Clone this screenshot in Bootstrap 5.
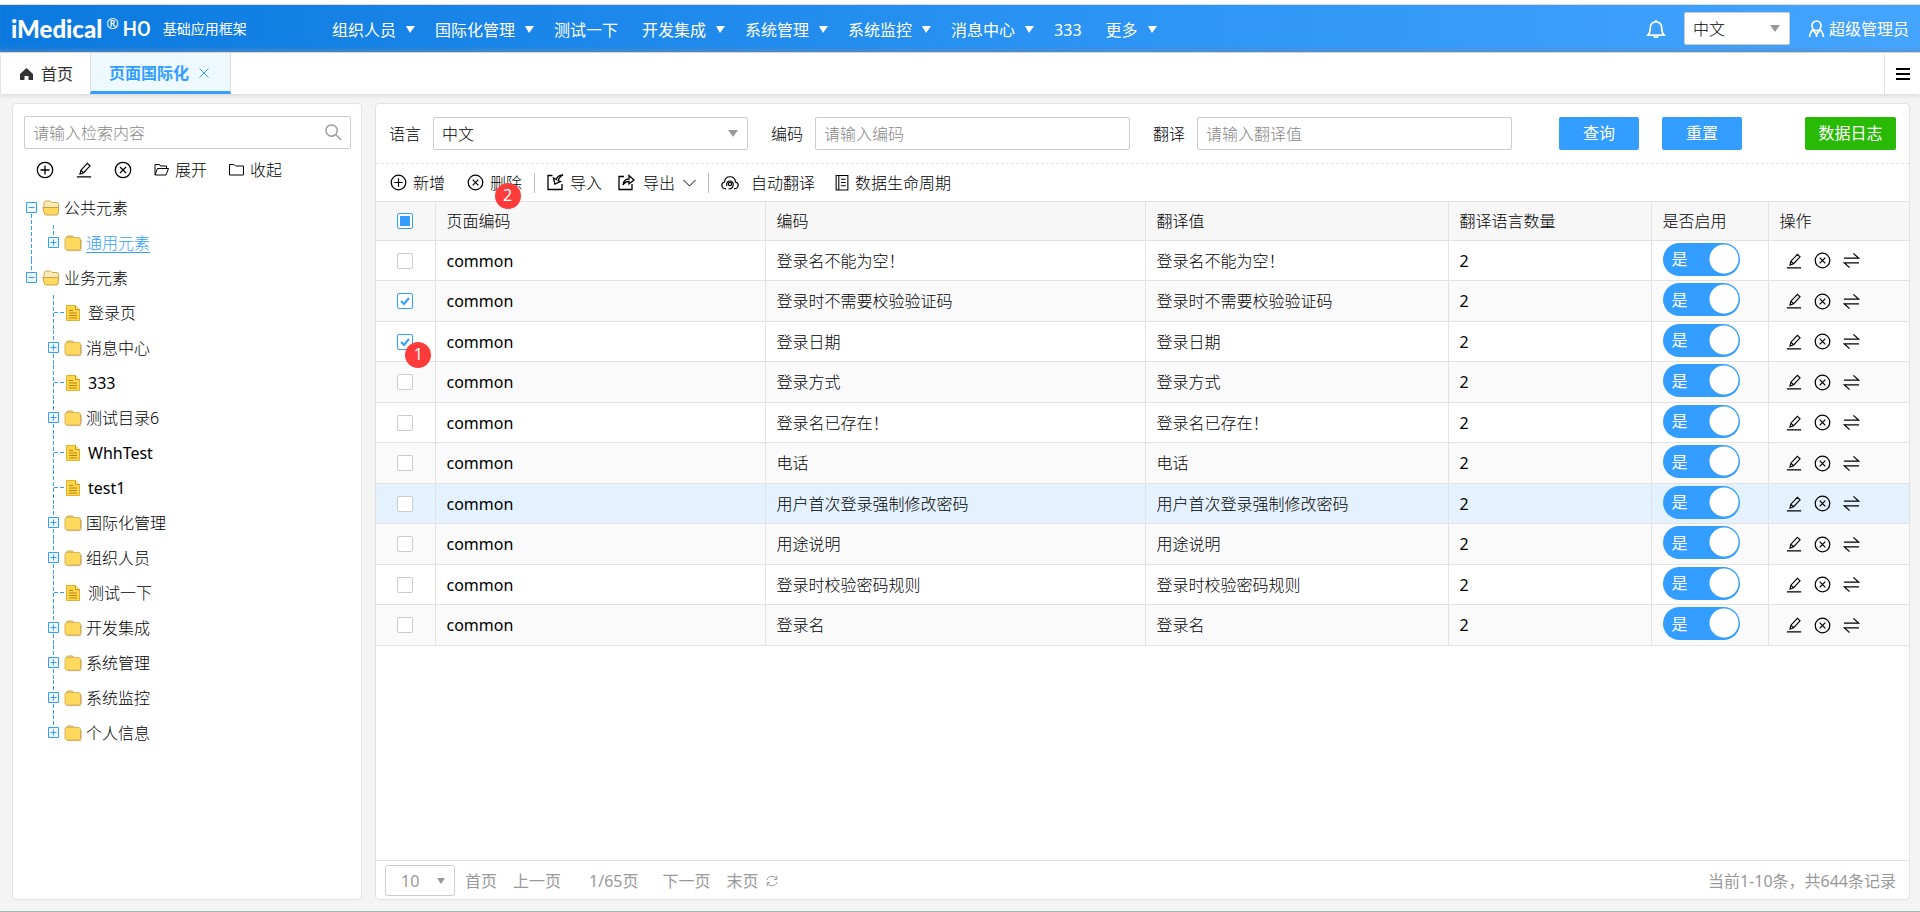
<!DOCTYPE html>
<html lang="zh-CN">
<head>
<meta charset="utf-8">
<meta name="viewport" content="width=device-width, initial-scale=1">
<title>页面国际化</title>
<link href="https://cdn.jsdelivr.net/npm/bootstrap@5.3.0/dist/css/bootstrap.min.css" rel="stylesheet">
<style>
:root{--hisui:#339eff;--line:#e2e2e2;--field:#ccc}
body{font:16px/20px "Noto Sans","Noto Sans CJK SC",sans-serif;font-weight:300;color:#000;background:#f4f4f4;border-bottom:1px solid #a3b4bd;min-height:100vh}
svg{display:block;flex:none;fill:none;stroke:currentColor}
button,select,input{font:inherit;color:inherit}
a{color:inherit;text-decoration:none}
.strip{height:5px;background:#fff;border-bottom:1px solid #ddd}
.topbar{height:47px;padding-left:11px;padding-right:11px;color:#fff;font-weight:400;background:linear-gradient(90deg,#0b79df,#2a93f3 55%,#44a5ff);box-shadow:inset 0 -4px 4px -2px rgba(110,150,190,.7)}
.brand{width:309px;height:40px}
.brand-name{font:900 24px/28px Lato,sans-serif}
.brand-reg{font-size:15px;line-height:16px;margin-left:4px;align-self:flex-start;padding-top:6px}
.brand-ho{font:500 20px/28px Roboto,sans-serif;margin-left:4px}
.brand-sub{font-size:14px;margin-left:12px}
.menu-main{padding-top:2px}
.menu-link{display:flex;align-items:center;gap:10px;padding:0 12px;line-height:24px;white-space:nowrap}
.menu-link.has-sub{padding-right:8px}
.has-sub::after{content:"";border:solid transparent;border-width:7px 5px 0 4px;border-top-color:currentColor;width:9px}
.user-tools{gap:18px}
.pick{appearance:none;border:1px solid var(--field);border-radius:2px;height:33px;padding:0 30px 0 8px;background:#fff url("data:image/svg+xml,%3Csvg xmlns='http://www.w3.org/2000/svg' width='10' height='7'%3E%3Cpath d='M0 0h10L5 7z' fill='%23999'/%3E%3C/svg%3E") no-repeat right 9px center;color:#000}
.pick-lang{width:106px;font-weight:300}
.pick-size{width:70px;height:31px;color:#999;font-weight:400;padding-left:15px;border-radius:3px;background-size:8px 6px}
.tabbar{height:42px;background:#fff;border-top:1px solid #d5d5d5;box-shadow:0 1px 5px rgba(0,0,0,.14);z-index:1}
.tablist{border:1px solid var(--line);border-width:0 1px 0 1px;border-radius:4px 4px 0 0;padding-left:1px}
.tab-home{padding:0 17px 0 18px;gap:8px;color:#333;font-weight:400}
.tab-open{background:#edf8ff;border-left:1px solid #ddd;border-right:1px solid #ddd;border-bottom:3px solid var(--hisui);color:var(--hisui);padding:2px 21px 0 18px;gap:10px;font-weight:600}
.plain{border:0;background:none;padding:0;display:inline-flex;align-items:center;white-space:nowrap}
.burger{width:35px}
.workspace{padding:9px 12px 11px 12px;gap:13px}
.pane{background:#fff;border:1px solid var(--line);border-radius:4px}
.side{width:350px;padding:12px 10px 0 11px}
.field{border:1px solid var(--field);border-radius:2px;height:33px;padding:0 8px;background:#fff;outline:0;min-width:0}
.field::placeholder{color:#888;opacity:1}
.seek{color:#999}
.side-tools{height:41px;padding-left:12px;gap:22px}
.side-tools .plain{gap:6px}
.tree,.tree ul{list-style:none;margin:0;padding:0}
.tree{--dash:repeating-linear-gradient(var(--hisui) 0 4px,transparent 4px 6px)}
.tree>li{background:var(--dash) 7px 18px/1px 100% no-repeat}
.tree>li:last-child{background-position:7px 0;background-size:1px 17px}
.tree ul>li{background:var(--dash) 29px 0/1px 100% no-repeat}
.tree ul>li:last-child{background-size:1px 17px}
.node{display:flex;align-items:center;height:35px;padding-left:2px}
.tree ul .node{padding-left:24px}
.node .ex{width:11px;height:11px;background:#fff}
.node .ic{width:18px;height:18px;margin:0 4px 0 5px}
.leaf .branch{width:11px;height:1px;margin-left:6px;background:repeating-linear-gradient(90deg,var(--hisui) 0 4px,transparent 4px 6px)}
.leaf .ic{margin:0 6px 0 -1px}
.node a.on{color:var(--hisui);text-decoration:underline;text-underline-offset:3px}
.latin{font-weight:400}
.filters{padding:13px;gap:23px;border-bottom:1px dashed var(--line)}
.f-item{display:flex;align-items:center;flex:1 1 0;gap:12px;max-width:359px}
.f-item label{white-space:nowrap}
.f-item .field,.f-item .pick{flex:1;min-width:0}
.act{height:33px;border:0;border-radius:2px;color:#fff;font-weight:400;background:var(--hisui);width:80px;padding:0;line-height:33px}
.act.log{background:#28ba05;width:91px}
.tools{height:37px;padding:0 14px;gap:16px}
.tools .plain{gap:6px}
.tools .wide{gap:8px}
.tools>.plain:first-child{margin-right:6px}
.tool-set{display:flex;align-items:center;gap:12px}
.bar{width:1px;height:20px;background:#bbb}
.pin{position:absolute;width:26px;height:26px;border-radius:50%;background:#fe3b3b;color:#fff;font-weight:400;line-height:25px;text-align:center;z-index:2}
.grid{table-layout:fixed;width:100%;border-collapse:collapse;margin:0}
.grid th,.grid td{font-weight:inherit;padding:0 11px;border:1px solid var(--line);height:40px;white-space:nowrap;text-align:left;vertical-align:middle}
.grid th{background:#f7f7f7;height:39px}
.grid td:nth-child(2),.grid td:nth-child(5){font-weight:400}
.grid tr>:first-child{border-left:0;text-align:center;padding:0}
.grid tr>:last-child{border-right:0;padding-left:17px}
.grid tr>th:last-child{padding-left:11px}
.grid tbody tr:nth-child(even){background:#fafafa}
.grid tbody tr:nth-child(even) td{height:41px}
.grid tbody tr.hot{background:#e3f2fe}
.tick{appearance:none;display:block;margin:0 auto;width:16px;height:16px;border:1px solid var(--field);border-radius:2px;background:#fff center no-repeat}
.tick:checked{border-color:var(--hisui);background-image:url("data:image/svg+xml,%3Csvg xmlns='http://www.w3.org/2000/svg' width='12' height='12'%3E%3Cpath d='M2 6l3 3 5-6' fill='none' stroke='%23339eff' stroke-width='2'/%3E%3C/svg%3E")}
.tick.part{border-color:var(--hisui);background-image:linear-gradient(var(--hisui),var(--hisui));background-size:10px 10px}
.onoff{display:grid;align-items:center;width:77px;height:33px;margin-bottom:3px}
.onoff>*{grid-area:1/1}
.onoff input{appearance:none;width:100%;height:33px;margin:0;border-radius:17px;background:radial-gradient(circle at 61px 16px,#fff 14px,transparent 15px),var(--hisui)}
.onoff span{color:#fff;font-weight:400;padding-left:9px;z-index:1}
.row-acts{display:flex;gap:12px}
.pager{height:39px;border-top:1px solid var(--line);color:#999;font-weight:400;padding:1px 13px 0 9px}
.pager-nav{display:flex;align-items:center;gap:16px;padding-left:10px}
</style>
</head>
<body class="d-flex flex-column">
<svg width="0" height="0" class="position-absolute" aria-hidden="true">
  <symbol id="i-add" viewBox="0 0 18 18"><circle cx="9" cy="9" r="7.7"/><path d="M9 4.5v9M4.5 9h9"/></symbol>
  <symbol id="i-del" viewBox="0 0 18 18"><circle cx="9" cy="9" r="7.7"/><path d="M6 6l6 6M12 6l-6 6"/></symbol>
  <symbol id="i-pen" viewBox="0 0 18 18"><path d="M1 16.7h16M4.5 13.5l1-4.3 7.3-7.6 3 2.7-7.2 7.8zM5.6 9.4l3 2.7"/></symbol>
  <symbol id="i-swap" viewBox="0 0 18 18"><path d="M1 6.5h15.5L11 1.5M17 11.5H1.500l5.500 5"/></symbol>
  <symbol id="i-plus" viewBox="0 0 11 11"><path d="M.5.5h10v10H.5zM5.500 2.500v6M2.500 5.500h6" stroke="#339eff" fill="#eef7ff"/></symbol>
  <symbol id="i-minus" viewBox="0 0 11 11"><path d="M.5.5h10v10H.5zM2.500 5.500h6" stroke="#339eff" fill="#eef7ff"/></symbol>
  <symbol id="i-dir" viewBox="0 0 18 18"><path d="M2 4l1.500-2h5l1.500 2z" fill="#f9e3a0" stroke="#c9a03f"/><rect x="1" y="3.500" width="15.500" height="12.500" rx="2" fill="#ffd95e" stroke="#d9b45a"/><path d="M3 16.700h13.500l.8-1.500V6" stroke="#b98f3c" stroke-opacity=".6"/></symbol>
  <symbol id="i-dir-open" viewBox="0 0 18 18"><path d="M2 9V4l1.500-2h5L10 3.500h5.500l1 1.500v5z" fill="#faeab5" stroke="#d0a850"/><path d="M.8 8.500h15.900l-.7 6.500-1 1H3.500l-1-1z" fill="#ffd95e" stroke="#c9a14a"/></symbol>
  <symbol id="i-doc" viewBox="0 0 18 18"><path d="M2.500 1.500h9l4 4v11h-13z" fill="#ffd54a" stroke="#e2b02c"/><path d="M11.500 1.500v4h4" stroke="#c9971a" fill="#fff0b3"/><path d="M5 6.500h4M5 9h8M5 11.500h8M5 14h8" stroke="#b9860c"/></symbol>
</svg>

<div class="strip"></div>
<header class="topbar d-flex align-items-center">
  <div class="brand d-flex align-items-center">
    <span class="brand-name">iMedical</span><span class="brand-reg">®</span><span class="brand-ho">HO</span><span class="brand-sub">基础应用框架</span>
  </div>
  <nav class="menu-main d-flex flex-grow-1" aria-label="主菜单">
    <a class="menu-link has-sub" href="#">组织人员</a>
    <a class="menu-link has-sub" href="#">国际化管理</a>
    <a class="menu-link" href="#">测试一下</a>
    <a class="menu-link has-sub" href="#">开发集成</a>
    <a class="menu-link has-sub" href="#">系统管理</a>
    <a class="menu-link has-sub" href="#">系统监控</a>
    <a class="menu-link has-sub" href="#">消息中心</a>
    <a class="menu-link" href="#">333</a>
    <a class="menu-link has-sub" href="#">更多</a>
  </nav>
  <div class="user-tools d-flex align-items-center">
    <button class="plain" aria-label="消息"><svg width="20" height="20" viewBox="0 0 21 20" stroke-width="1.800"><path d="M2 16.500h17c-2-2-2.500-4-2.500-7.500C16.500 4.500 14 2.500 10.500 2.500S4.500 4.500 4.500 9c0 3.500-.5 5.500-2.500 7.500zM10.500.5v2M8 17c.5 2.500 4.500 2.500 5 0"/></svg></button>
    <select class="pick pick-lang" aria-label="界面语言"><option>中文</option></select>
    <a href="#" class="d-flex align-items-center"><svg class="me-1" width="17" height="18" viewBox="0 0 17 18" stroke-width="1.700"><ellipse cx="8.500" cy="5.800" rx="4.500" ry="4.800"/><path d="M5.500 9.500C3 11 2 13 1.500 17M11.500 9.500c2.500 1.500 3.500 3.500 4 7.500M5.500 10.500l3 4 3-4M8.500 14v3"/></svg>超级管理员</a>
  </div>
</header>

<div class="tabbar d-flex">
  <div class="tablist d-flex flex-grow-1">
    <a href="#" class="tab-home d-flex align-items-center"><svg width="13" height="12" viewBox="0 0 13 12"><path d="M6.500 0L13 6v6H8.500V8h-4v4H0V6z" fill="#333" stroke="none"/></svg>首页</a>
    <a href="#" class="tab-open d-flex align-items-center">页面国际化<svg width="10" height="10" viewBox="0 0 10 10"><path d="M.5.5l9 9M9.500.5l-9 9"/></svg></a>
  </div>
  <button class="plain burger justify-content-center" aria-label="标签菜单"><svg width="14" height="12" viewBox="0 0 14 12" stroke-width="2"><path d="M0 1h14M0 6h14M0 11h14"/></svg></button>
</div>

<main class="workspace d-flex flex-grow-1">
  <aside class="pane side flex-shrink-0">
    <div class="field d-flex align-items-center">
      <input class="field border-0 p-0 flex-grow-1 h-auto" type="search" placeholder="请输入检索内容" aria-label="检索">
      <button class="plain seek" aria-label="搜索"><svg width="17" height="17" viewBox="0 0 18 18" stroke-width="1.500"><circle cx="7" cy="7" r="6"/><path d="M11.500 11.500l5.500 5.500"/></svg></button>
    </div>
    <div class="side-tools d-flex align-items-center">
      <button class="plain" aria-label="新增"><svg width="18" height="18" stroke-width="1.300"><use href="#i-add"/></svg></button>
      <button class="plain" aria-label="修改"><svg width="16" height="16" stroke-width="1.300"><use href="#i-pen"/></svg></button>
      <button class="plain" aria-label="删除"><svg width="18" height="18" stroke-width="1.300"><use href="#i-del"/></svg></button>
      <button class="plain"><svg width="15" height="13" viewBox="0 0 15 13"><path d="M1 12V1.500h4.500l1 1.500h6v2.500M1 12L3.500 5.500h11L12 12z"/></svg>展开</button>
      <button class="plain"><svg width="15" height="13" viewBox="0 0 15 13"><path d="M.5 12V1.500H5L6.500 3h8v9z"/></svg>收起</button>
    </div>
    <ul class="tree">
      <li><div class="node"><svg class="ex"><use href="#i-minus"/></svg><svg class="ic"><use href="#i-dir-open"/></svg><a href="#">公共元素</a></div>
        <ul><li><div class="node"><svg class="ex"><use href="#i-plus"/></svg><svg class="ic"><use href="#i-dir"/></svg><a class="on" href="#">通用元素</a></div></li></ul>
      </li>
      <li><div class="node"><svg class="ex"><use href="#i-minus"/></svg><svg class="ic"><use href="#i-dir-open"/></svg><a href="#">业务元素</a></div>
        <ul>
          <li><div class="node leaf"><span class="branch"></span><svg class="ic"><use href="#i-doc"/></svg><a href="#">登录页</a></div></li>
          <li><div class="node"><svg class="ex"><use href="#i-plus"/></svg><svg class="ic"><use href="#i-dir"/></svg><a href="#">消息中心</a></div></li>
          <li><div class="node leaf"><span class="branch"></span><svg class="ic"><use href="#i-doc"/></svg><a class="latin" href="#">333</a></div></li>
          <li><div class="node"><svg class="ex"><use href="#i-plus"/></svg><svg class="ic"><use href="#i-dir"/></svg><a href="#">测试目录6</a></div></li>
          <li><div class="node leaf"><span class="branch"></span><svg class="ic"><use href="#i-doc"/></svg><a class="latin" href="#">WhhTest</a></div></li>
          <li><div class="node leaf"><span class="branch"></span><svg class="ic"><use href="#i-doc"/></svg><a class="latin" href="#">test1</a></div></li>
          <li><div class="node"><svg class="ex"><use href="#i-plus"/></svg><svg class="ic"><use href="#i-dir"/></svg><a href="#">国际化管理</a></div></li>
          <li><div class="node"><svg class="ex"><use href="#i-plus"/></svg><svg class="ic"><use href="#i-dir"/></svg><a href="#">组织人员</a></div></li>
          <li><div class="node leaf"><span class="branch"></span><svg class="ic"><use href="#i-doc"/></svg><a href="#">测试一下</a></div></li>
          <li><div class="node"><svg class="ex"><use href="#i-plus"/></svg><svg class="ic"><use href="#i-dir"/></svg><a href="#">开发集成</a></div></li>
          <li><div class="node"><svg class="ex"><use href="#i-plus"/></svg><svg class="ic"><use href="#i-dir"/></svg><a href="#">系统管理</a></div></li>
          <li><div class="node"><svg class="ex"><use href="#i-plus"/></svg><svg class="ic"><use href="#i-dir"/></svg><a href="#">系统监控</a></div></li>
          <li><div class="node"><svg class="ex"><use href="#i-plus"/></svg><svg class="ic"><use href="#i-dir"/></svg><a href="#">个人信息</a></div></li>
        </ul>
      </li>
    </ul>
  </aside>

  <section class="pane d-flex flex-column flex-grow-1">
    <form class="filters d-flex align-items-center">
      <div class="f-item"><label for="f-lang">语言</label><select id="f-lang" class="pick"><option>中文</option></select></div>
      <div class="f-item"><label for="f-code">编码</label><input id="f-code" class="field" placeholder="请输入编码"></div>
      <div class="f-item"><label for="f-text">翻译</label><input id="f-text" class="field" placeholder="请输入翻译值"></div>
      <button type="button" class="act ms-4">查询</button>
      <button type="button" class="act">重置</button>
      <button type="button" class="act log ms-auto">数据日志</button>
    </form>
    <div class="tools d-flex align-items-center">
      <button class="plain"><svg width="17" height="17" stroke-width="1.300"><use href="#i-add"/></svg>新增</button>
      <div class="tool-set">
        <button class="plain position-relative"><svg width="17" height="17" stroke-width="1.300"><use href="#i-del"/></svg>删除<span class="pin top-50 start-50">2</span></button>
        <span class="bar"></span>
        <button class="plain"><svg width="17" height="17" viewBox="0 0 17 17" stroke-width="1.300"><path d="M5.500 1.500H1v14h14V10M16 .8c-3.500.2-6 1.700-6.700 4.700L6.500 4l1.300 6 5.700-2.500-2.300-.8c.5-2.500 2-4.500 4.800-5.900z"/></svg>导入</button>
      </div>
      <div class="tool-set">
        <button class="plain wide"><svg width="17" height="17" viewBox="0 0 17 17" stroke-width="1.300"><path d="M6 2.500H1v13h13V10M5 11c.5-4 2.500-6 6-6V1.500L16 6l-5 4V7.500C8.500 7.500 6.500 8.500 5 11z"/></svg>导出<svg width="13" height="8" viewBox="0 0 13 8"><path d="M.5 1l6 6 6-6"/></svg></button>
        <span class="bar"></span>
        <button class="plain wide"><svg class="me-1" width="18" height="16" viewBox="0 0 18 16" stroke-width="1.200"><path d="M5 13.800C0 13.800-.5 8 3.500 7 4 0 14 0 14.500 7c4 1 3.500 6.800-1.500 6.800"/><circle cx="9" cy="9" r="1.600"/><path d="M5.800 11c-.8-3.500 1.200-5 3.200-5s3.500 1.500 3.200 4S10 14 7.500 14"/></svg>自动翻译</button>
      </div>
      <button class="plain ms-1"><svg width="14" height="16" viewBox="0 0 13 15"><path d="M1 .5h11v13.500H1zM3.500.5V14M5.500 4h4.500M5.500 7h4.500M5.500 10h4.500"/></svg>数据生命周期</button>
    </div>
    <table class="grid">
      <colgroup><col style="width:59px"><col style="width:330px"><col style="width:380px"><col style="width:303px"><col style="width:203px"><col style="width:117px"><col style="width:141px"></colgroup>
      <thead><tr><th><input type="checkbox" class="tick part" aria-label="全选"></th><th>页面编码</th><th>编码</th><th>翻译值</th><th>翻译语言数量</th><th>是否启用</th><th>操作</th></tr></thead>
      <tbody>
        <tr><td><input type="checkbox" class="tick" aria-label="选择"></td><td>common</td><td>登录名不能为空！</td><td>登录名不能为空！</td><td>2</td><td><label class="onoff"><input type="checkbox" checked><span>是</span></label></td><td><div class="row-acts"><button class="plain" aria-label="修改"><svg width="16" height="16" stroke-width="1.300"><use href="#i-pen"/></svg></button><button class="plain" aria-label="删除"><svg width="17" height="17" stroke-width="1.300"><use href="#i-del"/></svg></button><button class="plain" aria-label="翻译"><svg width="17" height="17" stroke-width="1.300"><use href="#i-swap"/></svg></button></div></td></tr>
      </tbody>
    </table>
    <div class="pager mt-auto d-flex align-items-center">
      <select class="pick pick-size" aria-label="每页条数"><option>10</option></select>
      <div class="pager-nav">
        <a href="#">首页</a>
        <a href="#">上一页</a>
        <span class="ps-2 pe-2 ms-1">1/65页</span>
        <a href="#">下一页</a>
        <a href="#">末页</a>
      </div>
      <button class="plain ms-2" aria-label="刷新"><svg width="12" height="12" viewBox="0 0 12 12"><path d="M1 5c.5-4 7.500-5.500 9.500-1M11 7c-.5 4-7.500 5.500-9.500 1M10.800 1v3.500H8M1.200 11V7.500H4"/></svg></button>
      <span class="ms-auto">当前1-10条，共644条记录</span>
    </div>
  </section>
</main>
<script>
// Remaining records share the first row's markup.
const body = document.querySelector('.grid tbody'), first = body.rows[0];
[['登录时不需要校验验证码', 1], ['登录日期', 1], ['登录方式'], ['登录名已存在！'], ['电话'], ['用户首次登录强制修改密码'], ['用途说明'], ['登录时校验密码规则'], ['登录名']].forEach(([text, picked], i) => {
  const row = first.cloneNode(true);
  row.cells[2].textContent = row.cells[3].textContent = text;
  row.cells[0].firstChild.checked = !!picked;
  if (i === 1) {
    row.cells[0].classList.add('position-relative');
    row.cells[0].insertAdjacentHTML('beforeend', '<span class="pin top-50 start-50">1</span>');
  }
  if (i === 5) row.classList.add('hot');
  body.append(row);
});
</script>
<script src="https://cdn.jsdelivr.net/npm/bootstrap@5.3.0/dist/js/bootstrap.bundle.min.js"></script>
</body>
</html>
